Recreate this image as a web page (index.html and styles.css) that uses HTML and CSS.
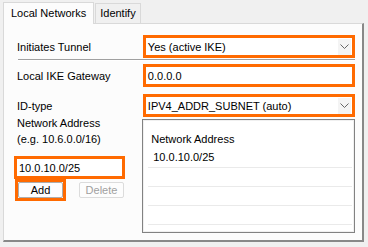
FILE: index.html
```html
<!DOCTYPE HTML>
<html>
  <head>
    <meta http-equiv="Content-Type" content="text/html; charset=utf-8" />
    <link rel="stylesheet" href="styles.css">
  </head>
  <body>
    <div class="tabs">
      <div class="tab active">Local Networks</div>
      <div class="tab">Identify</div>
    </div>
    <div class="panel">
      <div class="row">
        <div class="label">Initiates Tunnel</div>
        <div class="ctl combo"><span>Yes (active IKE)</span><i class="arrow"><svg width="9" height="5" viewBox="0 0 9 5"><path d="M0.5 0.5 L4.5 4.5 L8.5 0.5" fill="none" stroke="#666" stroke-width="1"/></svg></i></div>
      </div>
      <div class="sep"></div>
      <div class="row r2">
        <div class="label">Local IKE Gateway</div>
        <div class="ctl edit">0.0.0.0</div>
      </div>
      <div class="row r3">
        <div class="label">ID-type</div>
        <div class="ctl combo"><span>IPV4_ADDR_SUBNET (auto)</span><i class="arrow"><svg width="9" height="5" viewBox="0 0 9 5"><path d="M0.5 0.5 L4.5 4.5 L8.5 0.5" fill="none" stroke="#666" stroke-width="1"/></svg></i></div>
      </div>
      <div class="lower">
        <div class="left">
          <div class="hint">Network Address<br>(e.g. 10.6.0.0/16)</div>
          <div class="ctl edit net">10.0.10.0/25</div>
          <div class="buttons">
            <div class="hl"><div class="btn">Add</div></div>
            <div class="btn off">Delete</div>
          </div>
        </div>
        <div class="list">
          <div class="lhead">Network Address</div>
          <div class="item">10.0.10.0/25</div>
          <div class="item"></div>
          <div class="item"></div>
          <div class="item"></div>
          <div class="item"></div>
        </div>
      </div>
    </div>
  </body>
</html>
```
FILE: styles.css
```css
body    { background: #f0f0f0; font-family: "Liberation Sans", Arial, sans-serif; font-size: 11px; color: #000; margin: 0; }
.tabs   { display: flex; align-items: flex-end; height: 23px; padding-left: 3px; }
.tab    { height: 19px; line-height: 19px; padding: 0 4px; border: 1px solid #d9d9d9; border-bottom: 0; background: #f0f0f0; margin-right: 1px; }
.tab.active { height: 21px; line-height: 21px; padding: 0 7px 0 7px; background: #fcfcfc; border-color: #d9d9d9; margin-bottom: -1px; position: relative; }
.panel  { height: 219px; margin: 0 4px 0 3px; background: #fcfcfc; border: 1px solid #d9d9d9; border-right: 2px solid #888; border-bottom: 2px solid #888; box-sizing: border-box; padding: 11px 7px 0 13px; }
.row    { display: flex; align-items: center; height: 23px; }
.label  { width: 127px; }
.r2     { margin-top: 3px; }
.r3     { margin-top: 7px; }
.sep    { height: 1px; background: #a0a0a0; margin: 1px 0 0 1px; border-bottom: 1px solid #fff; }
.ctl    { box-sizing: border-box; height: 23px; width: 214px; border: 3px solid #ff6a00; background: #fff; padding-left: 2px; display: flex; align-items: center; }
.combo span { flex: 1; }
.arrow  { width: 13px; height: 16px; background: #f4f4f4; display: flex; align-items: center; justify-content: center; margin-right: 1px; }
.lower  { display: flex; }
.left   { width: 126px; }
.hint   { line-height: 16px; margin-top: -2px; }
.net    { width: 111px; margin: 9px 0 0 -3px; }
.buttons { display: flex; align-items: center; margin-left: -2px; }
.hl     { border: 3px solid #ff6a00; }
.btn    { width: 43px; height: 14px; line-height: 14px; text-align: center; border: 1px solid #adadad; background: #fdfdfd; border-radius: 2px; }
.off    { color: #a0a0a0; border-color: #dcdcdc; margin-left: 13px; }
.list   { box-sizing: border-box; width: 214px; height: 114px; margin-top: 2px; border: 1px solid #828282; box-shadow: inset 0 0 0 1px #f0f0f0; background: #fff; padding: 10px 2px 0 5px; }
.lhead  { height: 19px; line-height: 19px; padding-left: 3px; }
.item   { height: 19px; line-height: 17px; padding-left: 5px; border-bottom: 1px solid #eaeaea; box-sizing: border-box; }
.item:last-child { border-bottom: 0; }
```
